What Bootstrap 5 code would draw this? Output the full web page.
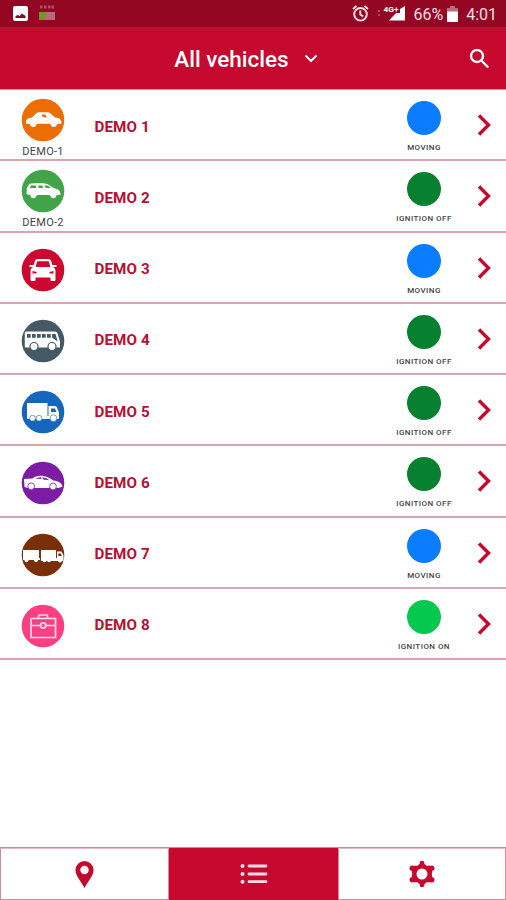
<!DOCTYPE html>
<html lang="en">
<head>
<meta charset="utf-8">
<meta name="viewport" content="width=device-width, initial-scale=1">
<title>All vehicles</title>
<link href="https://cdn.jsdelivr.net/npm/bootstrap@5.3.0/dist/css/bootstrap.min.css" rel="stylesheet">
<style>
body{font-family:Roboto,"Liberation Sans",sans-serif;background:#fff;height:900px;overflow:hidden;color:#333}
svg{display:block;flex:none}
.statusbar{height:27px;background:#930722;color:#f7dfe4;font-size:16px;line-height:27px}
.statusbar span{padding-top:2px}
.sb-left{padding-left:13px;gap:11px}
.sb-right{padding-right:9px}
.topbar{height:63px;background:#c6082f;color:#fff;border-bottom:1px solid #e58c9e;display:grid;grid-template-columns:1fr auto 1fr;padding:2px 16px 0}
.title{font-size:22.5px;font-weight:500;line-height:28px;gap:15px;margin-left:-9px;margin-right:5px}
.vrow{height:71.25px;border-bottom:2px solid #d3a6b2}
.vicon{width:86px;padding-top:4px}
.vicon.tagged{padding-top:5px}
.vicon svg{margin-top:1px}
.vlabel{font-size:11px;line-height:12px;letter-spacing:.3px;margin-top:4px;color:#444}
.vname{font-size:15.2px;font-weight:700;color:#b80f32;padding-left:8.5px;letter-spacing:.1px;line-height:20px;padding-top:4px}
.vstatus{width:80px;padding-top:11px}
.dot{width:34px;height:34px;border-radius:50%}
.slabel{font-size:8px;font-weight:500;line-height:10px;letter-spacing:.45px;margin-top:8px;color:#444;white-space:nowrap}
.moving{background:#0a7cff}.off{background:#07802f}.on{background:#05c94f}
.go{width:42px;padding:1px 0 0 13px;color:#c6082f}
.tabs{height:53px;display:grid;grid-template-columns:169px 169px 168px;border-top:1px solid #c88b9b}
.tab{color:#c6082f;border:1px solid #cf8a9b;border-top-color:#e3bcc6}
.tab.sel{background:#c6082f;color:#fbdce3;border-color:#c6082f}
</style>
</head>
<body class="d-flex flex-column">
<div class="statusbar d-flex justify-content-between">
  <div class="sb-left d-flex align-items-center">
    <svg width="15" height="15" viewBox="0 0 15 15"><rect width="15" height="15" rx="2" fill="#fff"/><path d="M2.500 12V10L5 9l1.500 1L9 7.500l3.500 2.500v2z" fill="#7c1029"/></svg>
    <svg width="16" height="17" viewBox="0 0 16 17"><path d="M1 2h2.500M5 2h2.500M9 2h2.500M12.500 2H15" stroke="#a8546a" stroke-width="2.800"/><path d="M0 7h16v8H0z" fill="#b8687c"/><path d="M0 7h8l-3 8H0z" fill="#719622"/></svg>
  </div>
  <div class="sb-right d-flex align-items-center">
    <svg width="17" height="17" viewBox="0 0 17 17" fill="none" stroke="#f7dfe4" stroke-width="1.900"><circle cx="8.500" cy="9.300" r="6.300"/><path d="M1 4l3.500-3M16 4l-3.500-3M8.300 5.500v4l3 2"/></svg>
    <svg class="ms-2" width="28" height="17" viewBox="0 0 28 17"><path d="M1 6h2M1 10h2" stroke="#b65c72" stroke-width="1.500"/><path d="M12 15.500l7-7.500h4V4l5-3v14.500z" fill="#fff"/><text x="6.500" y="7" font-size="8" font-weight="700" fill="#fff" textLength="15" lengthAdjust="spacingAndGlyphs">4G+</text></svg>
    <span class="ms-2">66%</span>
    <svg class="ms-1" width="11" height="16" viewBox="0 0 11 16"><path d="M3 0h5v2h3v4H0V2h3z" fill="#bd6b7e"/><path d="M0 5.500h11V16H0z" fill="#fff"/></svg>
    <span class="ms-2">4:01</span>
  </div>
</div>
<header class="topbar align-items-center">
  <span></span>
  <div class="title d-flex align-items-center"><span>All vehicles</span><svg width="14" height="10" viewBox="0 0 14 10" fill="none" stroke="#fff" stroke-width="2"><path d="M1.500 1.500L7 7l5.500-5.500"/></svg></div>
  <svg class="ms-auto" width="21" height="21" viewBox="0 0 21 21" fill="none" stroke="#fff" stroke-width="2.400"><circle cx="8" cy="7" r="6"/><path d="M12.300 11.500l7 7"/></svg>
</header>
<main class="flex-grow-1">
  <div id="vehicles"></div>
</main>
<nav class="tabs">
  <div class="tab d-flex align-items-center justify-content-center"><svg width="19" height="27" viewBox="0 0 19 27"><path fill="currentColor" fill-rule="evenodd" d="M9.500 0A9 9 0 0 0 .5 9.200C.5 15 5.500 19 9.500 27c4-8 9-12 9-17.800A9 9 0 0 0 9.500 0zm0 4.800a4.200 4.200 0 1 1 0 8.400 4.200 4.200 0 0 1 0-8.400z"/></svg></div>
  <div class="tab sel d-flex align-items-center justify-content-center"><svg width="28" height="21" viewBox="0 0 28 21" fill="none" stroke="currentColor" stroke-width="2.800" stroke-linecap="round"><path d="M9 2h17M9 10h17M9 17.700h17"/><path stroke-width="4" d="M2.500 2h.01M2.500 10h.01M2.500 17.700h.01"/></svg></div>
  <div class="tab d-flex align-items-center justify-content-center"><svg width="26" height="27" viewBox="-13 -13 26 27"><g fill="currentColor"><circle cy="-11" r="2.300"/><circle cy="11" r="2.300"/><circle cx="-10" cy="-5.800" r="2.500"/><circle cx="10" cy="-5.800" r="2.500"/><circle cx="-10" cy="5.800" r="2.500"/><circle cx="10" cy="5.800" r="2.500"/><path fill-rule="evenodd" d="M0-12.500L4.500-8.300H11L9.800 0 11 8.300H4.500L0 12.500-4.500 8.300H-11L-9.800 0-11-8.300h6.500zM0-5.500A5.500 5.500 0 1 0 0 5.500 5.500 5.500 0 0 0 0-5.500z"/></g></svg></div>
</nav>
<script>
// Glyphs share a 44x44 box whose centre is the badge circle.
const glyphs = {
  sedan: c => `<path fill="#fff" d="M5 23c1-3 4-3 6-3.500l4.500-4.500q1-.8 3-.8h8q1.500 0 3 1.200l4.500 4.200c5 .5 6.500 2 6.500 6.200H36.500a4 4 0 0 1-7.500 0H16a4 4 0 0 1-7.500 0H5z"/><circle cx="12.300" cy="26" r="2.900" fill="#fff"/><circle cx="32.700" cy="26" r="2.900" fill="#fff"/><path d="M20.500 16.500h4l1.300 3.300-4-.8z" fill="${c}"/>`,
  suv: c => `<path fill="#fff" d="M5.500 25l.3-6 2.700-4.300c7-1 13-1 18 .3l6 4c5 1 7 2.500 7 7h-4a4 4 0 0 1-7 0H16a4 4 0 0 1-7 0z"/><circle cx="12.500" cy="26.300" r="2.900" fill="#fff"/><circle cx="32.500" cy="26.300" r="2.900" fill="#fff"/><path d="M10 16.600L8.700 19H15v-2.400zM17 16.600l.8 2.400h4.500l-1-2.400zM23 16.600l2 2.400h5l-3.500-2.400z" fill="${c}"/>`,
  front: c => `<path fill="#fff" d="M12 19l1.800-6q.7-2 3-2h10.400q2.300 0 3 2l1.800 6q2.500 1 2.500 3.500V32q0 1-1 1h-3q-1 0-1-1v-2.500h-15V32q0 1-1 1h-3q-1 0-1-1v-9.500Q9.500 20 12 19zM8.500 17h4v2h-4zM31.500 17h4v2h-4z"/><path fill="${c}" d="M17 13.200h10q.8 0 1 .8l1.300 5H14.700l1.300-5q.2-.8 1-.8z"/><path fill="${c}" d="M11.500 23l4 1v1.500h-4zM32.500 23l-4 1v1.500h4z"/>`,
  bus: c => `<path fill="#fff" d="M5.500 12.500h28q2.500 0 3 2l2.500 8v6H5q-1.200 0-1.200-1v-13.500q0-1.500 1.700-1.500z"/><path fill="${c}" d="M6 15h3.700v3.700H6zM11 15h3.700v3.700H11zM16 15h3.700v3.700H16zM21 15h3.700v3.700H21zM26 15h3.700v3.700H26zM31 15h3.500l2.200 7.500-5.500-3.700z"/><g fill="#fff" stroke="${c}" stroke-width="1.200"><circle cx="13" cy="27.500" r="4"/><circle cx="31" cy="27.500" r="4"/></g>`,
  truck: c => `<path fill="#fff" d="M6 13h20.500v15H6zM27.500 16h6.500q1.500 0 2 1.500l2 5V29H27.500zM6 26h32v3H6z"/><path fill="${c}" d="M30 18.500h4l1.500 3.500H30z"/><g fill="#fff" stroke="${c}" stroke-width=".6"><circle cx="11.500" cy="28.200" r="2.900"/><circle cx="18" cy="28.200" r="2.900"/><circle cx="32.500" cy="28.200" r="3.400"/></g>`,
  sport: c => `<path fill="#fff" d="M3 18l8.500-.5c4-3.500 10-3.500 16-1l5 3c5 .8 8.500 2.500 9 6l-4 1.500H7l-3.500-1z"/><path fill="${c}" d="M14.500 17.800q2.500-1.600 5.500-1.600l.5 1.900zM21.500 16.200q4 .3 7 3l-6.200-.8z"/><g fill="#fff" stroke="${c}" stroke-width=".8"><circle cx="10.200" cy="25.300" r="3.400"/><circle cx="32" cy="25.500" r="3.400"/></g>`,
  trailer: c => `<path fill="#fff" d="M2 17h16v10H2zM20 17h15v10H20zM36 18.500h4.500l2 4V28H36zM2 25h17v2H2zM20 25h22v3H20z"/><path fill="${c}" d="M37.300 20.500h2.500l1 2.500h-3.500z"/><g fill="#fff"><circle cx="5.500" cy="27.300" r="1.900"/><circle cx="15" cy="27.300" r="1.900"/><circle cx="23.500" cy="27.300" r="1.900"/><circle cx="28" cy="27.300" r="1.900"/><circle cx="39" cy="27.500" r="2"/></g>`,
  case: c => `<g fill="none" stroke="#ffdcea" stroke-width="1.700"><path d="M10 14.500h24.500v19H10zM10 21.500h9.500M25 21.500h9.500M17.500 14.500v-2.500q0-1 1-1h7q1 0 1 1v2.500"/><circle cx="22.200" cy="21.500" r="2.600"/></g>`
};
const vehicles = [
  ["DEMO 1","sedan","#ed6d05","moving","DEMO-1"],
  ["DEMO 2","suv","#41a447","off","DEMO-2"],
  ["DEMO 3","front","#cc082f","moving"],
  ["DEMO 4","bus","#445965","off"],
  ["DEMO 5","truck","#1766be","off"],
  ["DEMO 6","sport","#7c1ca5","off"],
  ["DEMO 7","trailer","#793009","moving"],
  ["DEMO 8","case","#fb3f82","on"]
];
const labels = {moving:"MOVING", off:"IGNITION OFF", on:"IGNITION ON"};
document.getElementById("vehicles").innerHTML = vehicles.map(([name,g,c,s,tag]) => `
  <div class="vrow d-flex align-items-center">
    <div class="vicon d-flex flex-column align-items-center justify-content-center h-100 ${tag ? "tagged" : ""}">
      <svg width="44" height="44" viewBox="0 0 44 44"><circle cx="22" cy="22" r="21.300" fill="${c}"/>${glyphs[g](c)}</svg>
      ${tag ? `<div class="vlabel">${tag}</div>` : ""}
    </div>
    <div class="vname flex-grow-1">${name}</div>
    <div class="vstatus d-flex flex-column align-items-center align-self-start">
      <div class="dot ${s}"></div><div class="slabel">${labels[s]}</div>
    </div>
    <div class="go"><svg width="15" height="22" viewBox="0 0 15 22" fill="none" stroke="currentColor" stroke-width="3.400"><path d="M2 1.500L11.500 11 2 20.500"/></svg></div>
  </div>`).join("");
</script>
<script src="https://cdn.jsdelivr.net/npm/bootstrap@5.3.0/dist/js/bootstrap.bundle.min.js"></script>
</body>
</html>
